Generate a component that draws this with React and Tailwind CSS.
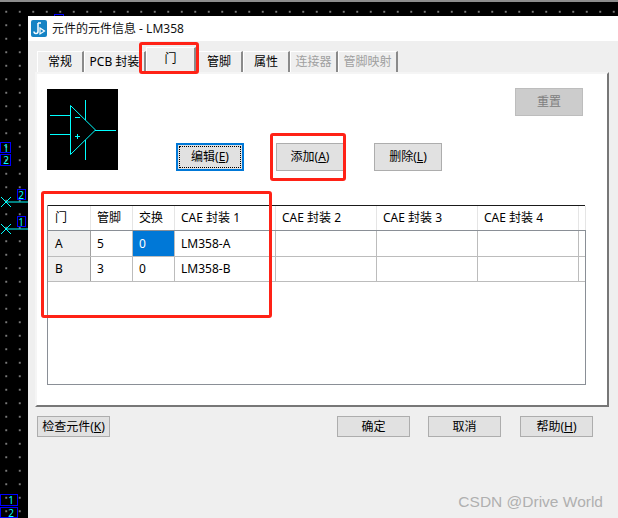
const tabs = [
  { label: "常规", w: "w-[47px]" },
  { label: "PCB 封装", w: "w-[62px]" },
  { label: "门", w: "w-[50px]", active: true },
  { label: "管脚", w: "w-[47px]" },
  { label: "属性", w: "w-[47px]" },
  { label: "连接器", w: "w-[48px]", disabled: true },
  { label: "管脚映射", w: "w-[60px]", disabled: true },
]

const headers = ["门", "管脚", "交换", "CAE 封装 1", "CAE 封装 2", "CAE 封装 3", "CAE 封装 4", ""]
const rows = [
  ["A", "5", "0", "LM358-A"],
  ["B", "3", "0", "LM358-B"],
]

function Btn({ children, className = "" }) {
  return (
    <button className={`flex items-center justify-center bg-[#e1e1e1] border border-[#adadad] text-[12px] text-black ${className}`}>
      {children}
    </button>
  )
}

function Key({ children }) {
  return <span className="underline">{children}</span>
}

function PinBox({ n, className }) {
  return (
    <div className={`absolute border border-[#0000ff] text-[#00ffff] text-[10px] leading-none flex items-center justify-end pr-[1px] ${className}`}>
      {n}
    </div>
  )
}

function AmpSymbol() {
  return (
    <svg width="71" height="81" viewBox="0 0 71 81" className="bg-black shrink-0 block" fill="none" stroke="#00ffff" strokeWidth="1">
      <path d="M23.5 16.5 L48.5 41 L23.5 65.5 Z" />
      <path d="M3 26.5 H23 M3 45.5 H23 M48 41.5 H69 M38.5 11 V31 M38.5 51 V71" />
      <path d="M28 28.5 H33 M28 47.5 H33 M30.5 45 V50" />
    </svg>
  )
}

function AppIcon() {
  return (
    <svg width="16" height="17" viewBox="0 0 16 17" className="shrink-0">
      <rect width="16" height="17" rx="2" fill="#1583c4" />
      <path d="M7 3 V11.5 A2 2 0 0 1 3 11.5" fill="none" stroke="#fff" strokeWidth="1.5" />
      <path d="M7 3 H10" stroke="#fff" strokeWidth="1.5" />
      <path d="M9 8 L13.5 11 L9 14 Z" fill="none" stroke="#fff" strokeWidth="1.2" />
    </svg>
  )
}

function Cross({ y }) {
  return (
    <svg width="28" height="14" viewBox="0 0 28 14" className="absolute left-0" style={{ top: y - 7 }} fill="none" stroke="#00ffff" strokeWidth="1">
      <path d="M1 2 L11 12 M11 2 L1 12 M6 7 H28" />
    </svg>
  )
}

export default function App() {
  return (
    <div
      className="relative w-[618px] h-[518px] overflow-hidden flex flex-col"
      style={{ fontFamily: '"Noto Sans", "Noto Sans CJK SC", sans-serif' }}
    >
      <div className="h-[2px] bg-[#8c8c8c] shrink-0"></div>
      <div className="flex-1 flex flex-col pt-[14px] pl-[28px] bg-black bg-[radial-gradient(circle_at_center,#ffffff_0.55px,transparent_0.8px)] bg-[size:13.5px_13.5px] bg-[position:-0.5px_3px]">
        <div className="flex-1 flex flex-col bg-[#efefef]">
          {/* Title bar */}
          <div className="h-[25px] bg-white flex items-center gap-[5px] pl-[3px] shrink-0">
            <AppIcon />
            <span className="text-[12px] text-[#111]">元件的元件信息 - LM358</span>
          </div>

          {/* Tabs */}
          <div className="h-[31px] flex items-end pl-[9px] shrink-0">
            {tabs.map((t) => (
              <div
                key={t.label}
                className={`${t.w} flex items-center justify-center whitespace-nowrap overflow-hidden text-[12px] border-t border-l border-r-2 border-t-white border-l-white border-r-[#8a8a8a] bg-[#efefef] ${t.active ? "h-[25px] pb-[3px]" : "h-[21px]"} ${t.disabled ? "text-[#a0a0a0]" : "text-black"}`}
              >
                {t.label}
              </div>
            ))}
          </div>

          {/* Panel */}
          <div className="ml-[7px] mr-[9px] h-[335px] shrink-0 bg-white border-t-2 border-l-2 border-t-[#f5f5f5] border-l-[#f5f5f5] border-r-2 border-b-2 border-r-[#777] border-b-[#777] pt-[15px] pl-[10px] flex flex-col">
            <div className="flex h-[116px]">
              <AmpSymbol />
              <div className="flex-1 flex flex-col">
                <Btn className="self-end -mt-[1px] mr-[24px] w-[68px] h-[28px] !bg-[#cccccc] !border-[#bdbdbd] !text-[#808080]">重置</Btn>
                <div className="flex mt-[27px] pl-[58px]">
                  <button className="w-[68px] h-[28px] border-2 border-[#0078d7] bg-[#e1e1e1] p-[1px]">
                    <span className="h-full border border-dotted border-black flex items-center justify-center text-[12px] text-black">
                      编辑(<Key>E</Key>)
                    </span>
                  </button>
                  <Btn className="ml-[32px] w-[68px] h-[28px]">添加(<Key>A</Key>)</Btn>
                  <Btn className="ml-[30px] w-[68px] h-[28px]">删除(<Key>L</Key>)</Btn>
                </div>
              </div>
            </div>

            {/* Gate table */}
            <div className="w-[539px] h-[180px] border-l border-b border-[#8a8f96] text-[12px] text-black flex flex-col">
              <div className="grid grid-cols-[43px_42px_42px_101px_101px_101px_101px_6px] w-[537px] h-[25px] shrink-0 border-t border-[#1a1a1a]">
                {headers.map((h, i) => (
                  <div key={i} className={`flex items-center border-r border-[#e5e5e5] whitespace-nowrap overflow-hidden ${i === 0 ? "pl-[7px]" : "pl-[6px]"}`}>
                    {h}
                  </div>
                ))}
              </div>
              <div className="flex-1 border-t border-r border-[#8a8f96]">
                {rows.map((r, n) => (
                  <div key={r[0]} className={`grid grid-cols-[43px_42px_42px_101px_101px_101px_101px_6px] w-[537px] border-b border-[#bcbcbc] ${n === 0 ? "h-[26px]" : "h-[25px]"}`}>
                    {r.map((c, i) => (
                      <div
                        key={i}
                        className={`flex items-center border-r border-[#bcbcbc] ${i === 0 ? "pl-[7px] bg-[#efefef] border-r-[#a0a0a0]" : "pl-[6px]"} ${r[0] === "A" && i === 2 ? "bg-[#0078d7] text-white" : ""}`}
                      >
                        {c}
                      </div>
                    ))}
                    <div className="border-r border-[#bcbcbc]"></div>
                    <div className="border-r border-[#bcbcbc]"></div>
                    <div className="border-r border-[#bcbcbc]"></div>
                  </div>
                ))}
              </div>
            </div>
          </div>

          {/* Bottom buttons */}
          <div className="flex mt-[9px] pl-[9px]">
            <Btn className="w-[73px] h-[21px]">检查元件(<Key>K</Key>)</Btn>
            <Btn className="ml-[227px] w-[73px] h-[21px]">确定</Btn>
            <Btn className="ml-[18px] w-[73px] h-[21px]">取消</Btn>
            <Btn className="ml-[19px] w-[73px] h-[21px]">帮助(<Key>H</Key>)</Btn>
          </div>
        </div>
      </div>

      {/* Schematic behind the dialog, left edge */}
      <PinBox n="1" className="left-0 top-[142px] w-[11px] h-[11px]" />
      <PinBox n="2" className="left-0 top-[154px] w-[11px] h-[12px]" />
      <PinBox n="2" className="left-[17px] top-[189px] w-[9px] h-[11px]" />
      <PinBox n="1" className="left-[17px] top-[216px] w-[9px] h-[11px]" />
      <Cross y={202} />
      <Cross y={229} />
      <PinBox n="1" className="left-0 top-[494px] w-[18px] h-[12px] pr-[3px]" />
      <PinBox n="2" className="left-0 top-[507px] w-[18px] h-[11px] pr-[3px]" />
      <div className="absolute left-[54px] top-[14px] w-[10px] h-[2px] border-t border-l border-r border-[#0000ff]"></div>

      {/* Red annotation boxes */}
      <div className="absolute left-[139px] top-[42px] w-[60px] h-[32px] border-[3px] border-[#ff2216] rounded-[3px]"></div>
      <div className="absolute left-[270px] top-[133px] w-[76px] h-[48px] border-[3px] border-[#ff2216] rounded-[3px]"></div>
      <div className="absolute left-[41px] top-[191px] w-[231px] h-[127px] border-[3px] border-[#ff2216] rounded-[3px]"></div>

      {/* Watermark */}
      <div className="absolute right-[15px] top-[493px] text-[15.5px] leading-[18px] text-[#b0b0b0]" style={{ fontFamily: '"Liberation Sans", sans-serif' }}>
        CSDN @Drive World
      </div>
    </div>
  )
}
